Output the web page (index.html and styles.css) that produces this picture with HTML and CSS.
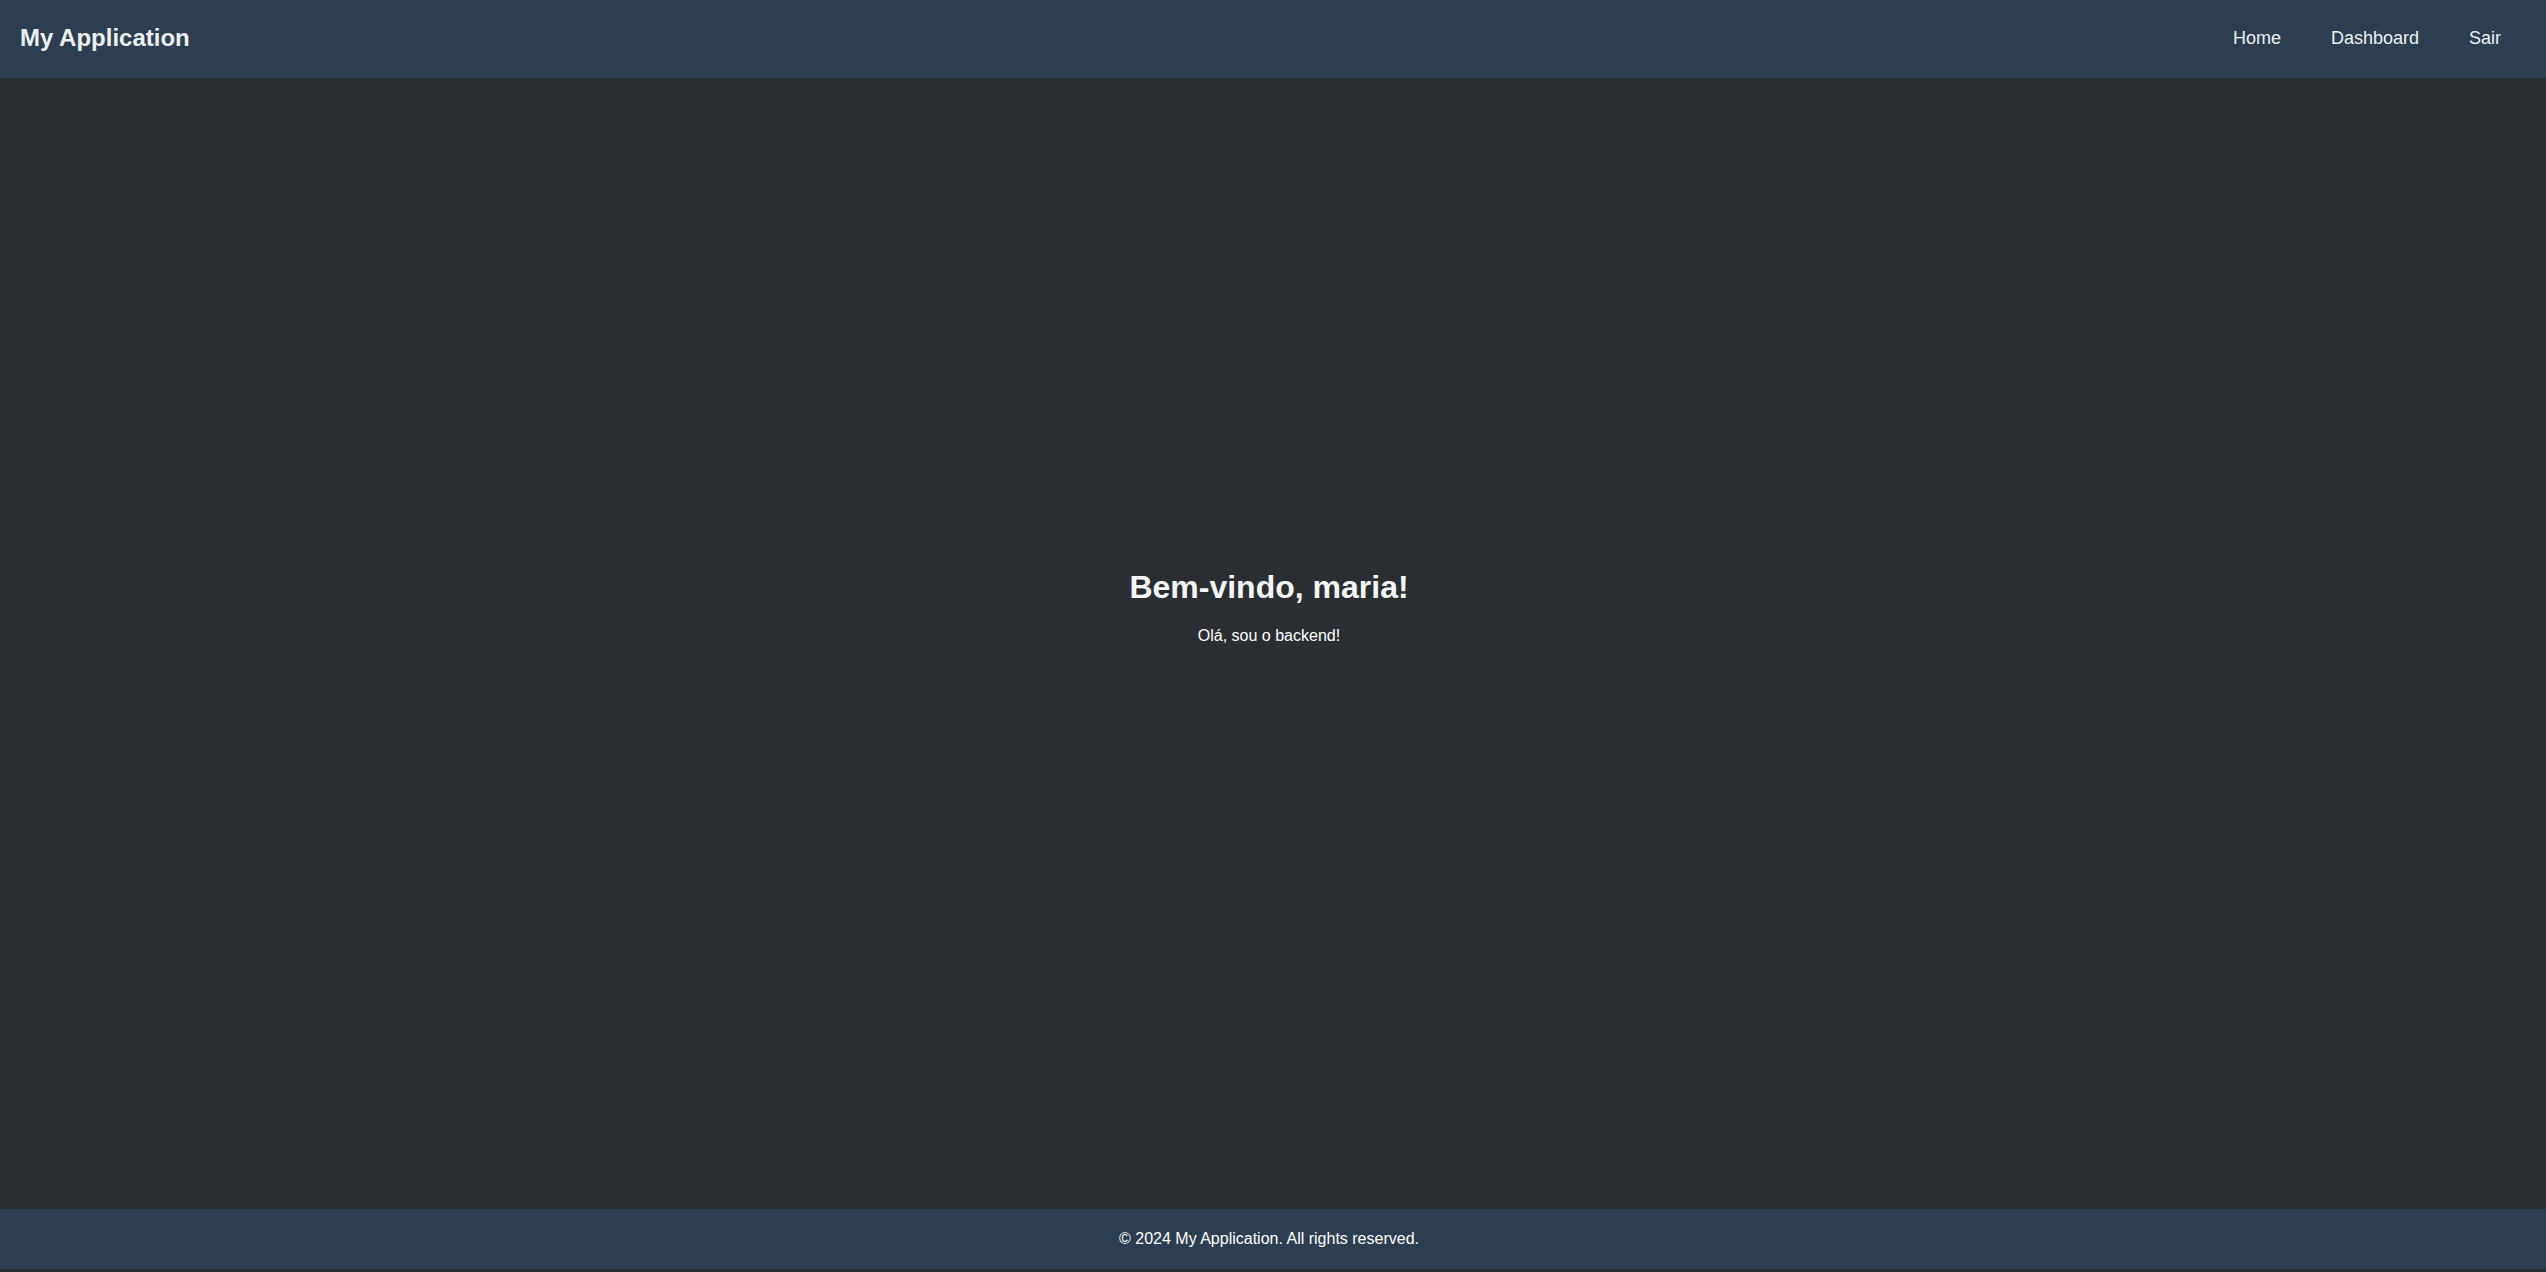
FILE: index.html
```html
<!DOCTYPE html>
<html lang="pt">
<head>
<meta charset="utf-8">
<title>My Application</title>
<link rel="stylesheet" href="styles.css">
</head>
<body>
<div class="page">
  <header class="topbar">
    <div class="brand">My Application</div>
    <nav class="nav">
      <a class="nav-link" href="#">Home</a>
      <a class="nav-link" href="#">Dashboard</a>
      <a class="nav-link" href="#">Sair</a>
    </nav>
  </header>
  <main class="content">
    <div class="welcome">
      <h1 class="welcome-title">Bem-vindo, maria!</h1>
      <p class="welcome-text">Olá, sou o backend!</p>
    </div>
  </main>
  <footer class="footer">© 2024 My Application. All rights reserved.</footer>
</div>
</body>
</html>
```
FILE: styles.css
```css
html, body {
  margin: 0;
  padding: 0;
}
body {
  background: #2a2e32;
  font-family: "Liberation Sans", Arial, sans-serif;
  color: #ecf0f1;
}
.page {
  display: flex;
  flex-direction: column;
  height: 1269px;
}
.topbar {
  height: 78px;
  box-sizing: border-box;
  padding: 0 20px 2px 20px;
  background: #2d3e50;
  display: flex;
  align-items: center;
  justify-content: space-between;
}
.brand {
  font-size: 24px;
  font-weight: bold;
  color: #ecf0f1;
}
.nav {
  display: flex;
}
.nav-link {
  color: #ecf0f1;
  text-decoration: none;
  font-size: 18px;
  padding: 0 25px;
}
.content {
  flex: 1;
  display: flex;
  flex-direction: column;
  align-items: center;
  justify-content: center;
  padding: 0 8px 79px 0;
}
.welcome {
  text-align: center;
}
.welcome-title {
  font-size: 32px;
  margin: 21.44px 0;
  color: #f4f6f7;
}
.welcome-text {
  font-size: 16px;
  margin: 16px 0;
  color: #ffffff;
}
.footer {
  height: 60px;
  box-sizing: border-box;
  padding-right: 8px;
  background: #2d3e50;
  display: flex;
  align-items: center;
  justify-content: center;
  font-size: 16px;
  color: #ffffff;
}
```
